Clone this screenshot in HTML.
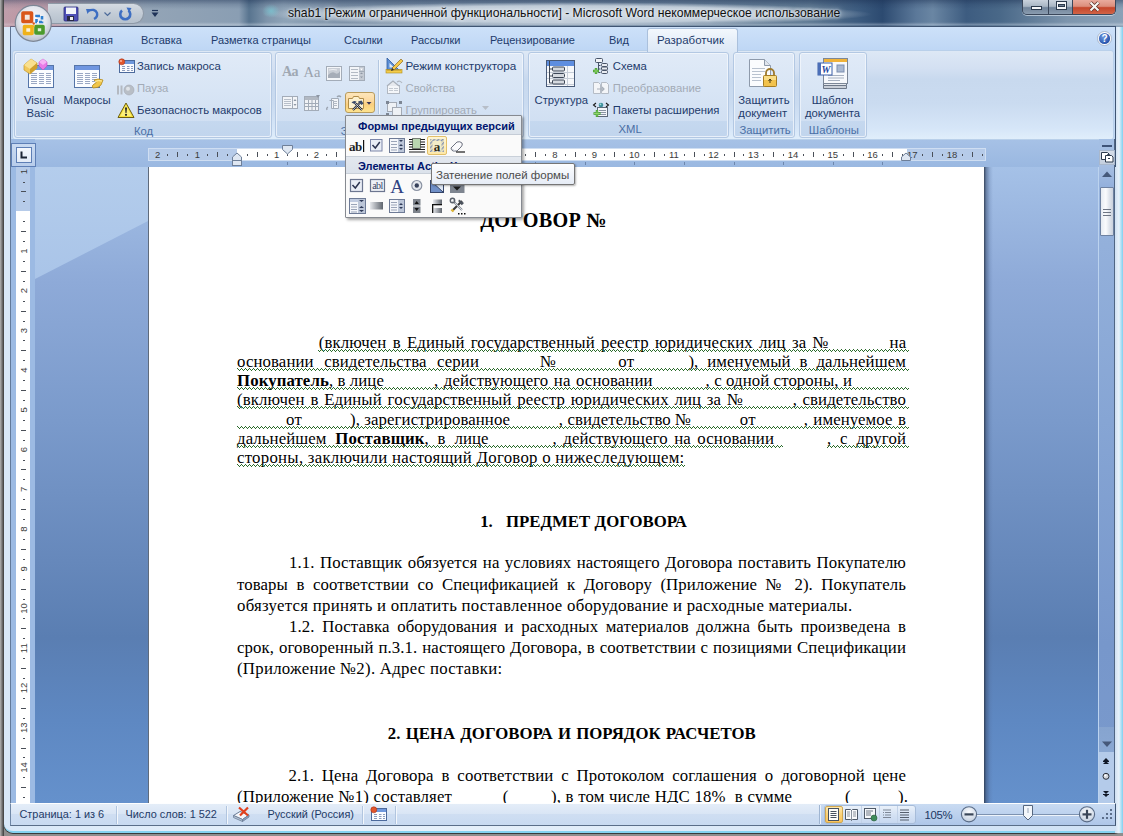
<!DOCTYPE html>
<html><head><meta charset="utf-8">
<style>
*{margin:0;padding:0;box-sizing:border-box}
html,body{width:1123px;height:836px;overflow:hidden;position:relative;background:#8e8e8e;font-family:"Liberation Sans",sans-serif}
.a{position:absolute}
.t{position:absolute;white-space:nowrap;font-family:"Liberation Sans",sans-serif;font-size:11.3px;color:#1e3b6c;line-height:14px}
.g{color:#a3abb6}
.d{position:absolute;white-space:nowrap;font-family:"Liberation Serif",serif;color:#000;line-height:20px}
#desk{left:0;top:0;width:4px;height:836px;background:linear-gradient(90deg,#b4b4b4,#6a6a6a 60%,#3a3a3a)}
#frame{left:4px;top:0;width:1119px;height:833px;background:linear-gradient(90deg,#d9e8f8,#e9f2fb 30%,#cfe1f5 100%);border-radius:0 0 9px 9px;border-bottom:2px solid #84d2f0;box-shadow:0 1px 0 #3a3a3a,-1px 0 0 #4a4a4a}
#rframe{left:1115px;top:0;width:8px;height:833px;background:linear-gradient(90deg,#cfe0f2,#e8f2fb 50%,#7fd0f0)}
#title{left:4px;top:0;width:1119px;height:27px;background:linear-gradient(90deg,#b9a8b3 0%,#aaa6b2 5%,#93a4b6 13%,#8a9eb3 21%,#58748f 21.9%,#7f95ab 23.5%,#8ea3b7 25%,#7b90a7 30%,#748aa2 45%,#6c849d 60%,#5d7892 72%,#3b5a7e 76.5%,#2c4a70 78.5%,#5b7899 81.5%,#6a86a3 83%,#3d5c80 86%,#496888 89%,#7d95ad 95%,#8aa1b7 100%)}
#tabs{left:10px;top:26px;width:1106px;height:114px;background:linear-gradient(#cde1f9,#bfd7f5 20%,#bfd6f3);border-top:1px solid #3f5573;border-left:1px solid #5e7392;border-right:1px solid #3f5573}
#ribbon{left:12px;top:50px;width:1102px;height:89.5px;background:linear-gradient(#dde8f5 0%,#d3e0f2 20%,#c8d9ee 32%,#cadbf0 60%,#d6e6f8 88%,#e0eefb 100%);border:1px solid #b9d0ea;border-radius:3px;box-shadow:0 1px 0 #e2f4fc}
.grp{position:absolute;top:52px;height:86px;border:1px solid #b3c8e3;border-radius:3px;background:linear-gradient(#e0eaf7,#d8e5f5 45%,#d0dff2 85%);box-shadow:inset 0 0 0 1px rgba(255,255,255,.5)}
.lbl{position:absolute;left:1px;right:1px;bottom:1px;height:15px;background:linear-gradient(#c5d8ef,#c1d5ed);border-radius:0 0 2px 2px}
#rulerrow{left:10px;top:140px;width:1106px;height:27px;border-left:1px solid #62799a;border-right:1px solid #3f5573;background:linear-gradient(#a6c1e6,#9ab8e1)}
#docarea{left:35px;top:167px;width:1064px;height:636px;background:linear-gradient(#a5c1e7 0%,#8eaad8 18%,#7a9acb 40%,#6688bb 62%,#5a7eb2 74%,#5e88c2 87%,#6591cc 100%)}
#streak{left:35px;top:167px;width:113px;height:115px;background:linear-gradient(#b4cdec,#a9c4e8);clip-path:polygon(0 0,100% 0,100% 54px,0 112px)}
#vrul{left:10px;top:139px;width:25px;height:664px;background:#9cbae3;border-left:1px solid #62799a}
#page{left:148px;top:167px;width:836px;height:636px;background:#fff;border-left:1px solid #5f6b7c}
#pshadow{left:984px;top:167px;width:9px;height:636px;background:linear-gradient(90deg,rgba(45,58,80,.9),rgba(60,80,115,.55) 25%,rgba(80,105,150,.2) 65%,rgba(90,120,170,0))}
#status{left:10px;top:803px;width:1106px;height:23px;background:linear-gradient(#e0eaf7,#d6e3f4 50%,#c9daf1);border-top:1px solid #fdfeff;border-left:1px solid #6f87a6;border-right:1px solid #3f5573;border-bottom:1px solid #5a6e89}
</style></head><body>
<div class="a" id="frame"></div>
<div class="a" id="desk"></div>
<div class="a" id="rframe"></div>
<div class="a" id="title"></div>
<div class="a" id="tabs"></div>
<div class="a" id="ribbon"></div>
<div class="a" style="left:647px;top:28px;width:91px;height:24px;border:1px solid #aac0dc;border-bottom:none;border-radius:3px 3px 0 0;background:linear-gradient(#f3f8fd,#e4edf8 60%,#dce8f6)"></div>
<div class="t" style="left:71px;top:33px;font-size:11px">Главная</div>
<div class="t" style="left:141px;top:33px;font-size:11px">Вставка</div>
<div class="t" style="left:211px;top:33px;font-size:11px">Разметка страницы</div>
<div class="t" style="left:344px;top:33px;font-size:11px">Ссылки</div>
<div class="t" style="left:411px;top:33px;font-size:11px">Рассылки</div>
<div class="t" style="left:490px;top:33px;font-size:11px">Рецензирование</div>
<div class="t" style="left:609px;top:33px;font-size:11px">Вид</div>
<div class="t" style="left:657px;top:33px;font-size:11.5px">Разработчик</div>
<svg class="a" style="left:1097px;top:31px" width="15" height="15" viewBox="0 0 15 15"><defs><radialGradient id="hg" cx="40%" cy="35%" r="70%"><stop offset="0" stop-color="#6f9be0"/><stop offset="1" stop-color="#1d4aa6"/></radialGradient></defs><circle cx="7.5" cy="7.5" r="7" fill="#fff" stroke="#9aaac0" stroke-width="0.8"/><circle cx="7.5" cy="7.5" r="5.6" fill="url(#hg)"/><text x="7.5" y="11.2" font-family="Liberation Sans" font-weight="bold" font-size="10" fill="#fff" text-anchor="middle">?</text></svg>

<div class="grp" style="left:14px;width:258px"><div class="lbl"></div></div>
<div class="grp" style="left:275px;width:249px"><div class="lbl"></div></div>
<div class="grp" style="left:528px;width:201px"><div class="lbl"></div></div>
<div class="grp" style="left:733px;width:62px"><div class="lbl"></div></div>
<div class="grp" style="left:799px;width:68px"><div class="lbl"></div></div>
<div class="a" style="left:378px;top:60px;width:1px;height:54px;background:#b3c7e0;box-shadow:1px 0 0 #f2f7fc"></div>
<!-- Код texts -->
<div class="t" style="left:24px;top:92.6px">Visual</div>
<div class="t" style="left:26.5px;top:105.7px">Basic</div>
<div class="t" style="left:63.5px;top:92.6px">Макросы</div>
<div class="t" style="left:137px;top:59.1px">Запись макроса</div>
<div class="t g" style="left:137px;top:81px">Пауза</div>
<div class="t" style="left:137px;top:102.9px">Безопасность макросов</div>
<div class="t" style="left:134px;top:123.7px;color:#4a6fa5">Код</div>
<div class="t" style="left:340.5px;top:123.7px;color:#4a6fa5">Элементы управления</div>
<div class="t" style="left:405.5px;top:59.1px;font-size:11.7px">Режим конструктора</div>
<div class="t g" style="left:405.5px;top:80.5px">Свойства</div>
<div class="t g" style="left:405.5px;top:102.6px">Группировать</div>
<svg class="a" style="left:482px;top:106px" width="7" height="4"><path d="M0 0H7L3.5 4Z" fill="#b7bec8"/></svg>
<div class="t" style="left:534.5px;top:93.2px">Структура</div>
<div class="t" style="left:612.8px;top:59.1px">Схема</div>
<div class="t g" style="left:612.8px;top:80.5px">Преобразование</div>
<div class="t" style="left:612.8px;top:102.6px">Пакеты расширения</div>
<div class="t" style="left:618.5px;top:122.1px;color:#4a6fa5">XML</div>
<div class="t" style="left:738.3px;top:92.5px">Защитить</div>
<div class="t" style="left:738.3px;top:105.9px">документ</div>
<div class="t" style="left:739.5px;top:122.6px;color:#4a6fa5">Защитить</div>
<div class="t" style="left:811.7px;top:92.5px">Шаблон</div>
<div class="t" style="left:805px;top:105.9px">документа</div>
<div class="t" style="left:808.8px;top:122.6px;color:#4a6fa5">Шаблоны</div>
<!-- VB icon -->
<svg class="a" style="left:22px;top:56px" width="34" height="34" viewBox="0 0 34 34">
<rect x="6.5" y="9.5" width="25" height="22" fill="#fbfdff" stroke="#5575a8"/>
<rect x="7" y="10" width="24" height="4" fill="#6f96e0"/>
<g stroke="#9aa8c4" stroke-width="1">
<path d="M9 17.5h6M17 17.5h5M24 17.5h5M9 19.5h6M17 19.5h5M24 19.5h5M9 21.5h6M17 21.5h5M24 21.5h5M9 23.5h6M17 23.5h5M24 23.5h5M9 25.5h6M17 25.5h5M24 25.5h5M9 27.5h6M17 27.5h5M24 27.5h5"/>
</g>
<path d="M2 9L9 3L15 7L15 12L8 18L2 14Z" fill="#f1c85a" stroke="#c49a2a" stroke-width=".7"/>
<path d="M2 9L9 3L15 7L8 13Z" fill="#f9e08f"/>
<path d="M8 13L15 7L15 12L8 18Z" fill="#cf9f2d"/>
<path d="M17 6L21 3L25 6L25 10L21 14L17 10Z" fill="#e97be8" stroke="#b94fb9" stroke-width=".6"/>
<path d="M17 6L21 3L25 6L21 9Z" fill="#f7b2f5"/>
</svg>
<!-- Macros icon -->
<svg class="a" style="left:72px;top:63px" width="34" height="28" viewBox="0 0 34 28">
<rect x="2.5" y="2.5" width="25" height="22" fill="#fbfdff" stroke="#5575a8"/>
<rect x="3" y="3" width="24" height="4" fill="#6f96e0"/>
<g stroke="#9aa8c4" stroke-width="1">
<path d="M5 10.5h6M13 10.5h5M20 10.5h5M5 12.5h6M13 12.5h5M20 12.5h5M5 14.5h6M13 14.5h5M20 14.5h5M5 16.5h6M13 16.5h5M20 16.5h5M5 18.5h6M13 18.5h5M20 18.5h5M5 20.5h6M13 20.5h5"/>
</g>
<path d="M22 17Q26 15 31 17L29 22Q27 25 21 25Q19 23 22 21Q25 20 24 19Z" fill="#f0c64a" stroke="#b48a1e" stroke-width=".8"/>
<path d="M23 18.5Q26 17 30 18" stroke="#fff3b0" stroke-width="1" fill="none"/>
</svg>
<!-- Record macro -->
<svg class="a" style="left:118px;top:58px" width="18" height="16" viewBox="0 0 18 16">
<rect x="1.5" y="2.5" width="15" height="12" fill="#fafcff" stroke="#4c6a9c"/>
<rect x="2" y="3" width="14" height="3" fill="#7098dc"/>
<path d="M4 8.5h3M9 8.5h2.5M13 8.5h2M4 10.5h3M9 10.5h2.5M13 10.5h2M4 12.5h3M9 12.5h2.5M13 12.5h2" stroke="#8b9bbb"/>
<circle cx="3.8" cy="3.8" r="3" fill="#e2562c" stroke="#a8321a" stroke-width=".6"/>
<circle cx="3" cy="3" r="1" fill="#f8b79f"/>
</svg>
<!-- Pause -->
<svg class="a" style="left:116px;top:84px" width="20" height="12" viewBox="0 0 20 12">
<rect x="1" y="1.5" width="2" height="9" fill="#b4b9c1"/><rect x="4.5" y="1.5" width="2" height="9" fill="#b4b9c1"/>
<circle cx="13" cy="6" r="5" fill="#b8bec6" stroke="#a2a8b2" stroke-width=".6"/><circle cx="12" cy="4.8" r="2" fill="#dfe3e8"/>
</svg>
<!-- Warning -->
<svg class="a" style="left:117px;top:102px" width="18" height="17" viewBox="0 0 18 17">
<path d="M9 1L17 15.5H1Z" fill="#f8e23a" stroke="#6b5d12" stroke-width="1" stroke-linejoin="round"/>
<path d="M9 3.5L14.5 14H3.5Z" fill="#fbef7a"/>
<path d="M8 5.5h2l-.5 5.5h-1Z" fill="#222"/><circle cx="9" cy="12.8" r="1.1" fill="#222"/>
</svg>
<!-- group2 icons -->
<div class="a" style="left:282px;top:64px;font-family:'Liberation Serif',serif;font-weight:bold;font-size:14px;color:#a0a8b3;letter-spacing:-0.5px;line-height:16px">Aa</div>
<div class="a" style="left:303.5px;top:64px;font-family:'Liberation Serif',serif;font-size:14.5px;color:#9aa2ad;letter-spacing:0px;line-height:16px">Aa</div>
<svg class="a" style="left:325px;top:65px" width="18" height="17" viewBox="0 0 18 17">
<rect x="1.5" y="1.5" width="15" height="14" fill="#f4f6f9" stroke="#a3acb8"/>
<rect x="3" y="3" width="12" height="10" fill="#c9ced6"/>
<path d="M3 10Q7 6 10 8T15 6V13H3Z" fill="#a6adb8"/><path d="M4 5Q8 4 12 5" stroke="#eef0f3" stroke-width="1.2" fill="none"/>
</svg>
<svg class="a" style="left:348px;top:65px" width="18" height="17" viewBox="0 0 18 17">
<rect x="1.5" y="1.5" width="15" height="14" fill="#f3f5f8" stroke="#a3acb8"/>
<path d="M3 4.5h7M3 7.5h7M3 10.5h7M3 13.5h7" stroke="#b3bac4"/>
<rect x="11" y="2" width="5" height="13" fill="#c4cad3"/>
<path d="M12 3.5h3l-1.5 2Z" fill="#fff"/><path d="M12 9l1.5-1.5L15 9Z" fill="#8d96a3"/><path d="M12 11.5h3l-1.5 1.5Z" fill="#8d96a3"/>
<path d="M11 6.5h5" stroke="#a3acb8"/>
</svg>
<svg class="a" style="left:281px;top:95px" width="18" height="15" viewBox="0 0 18 15">
<rect x="1.5" y="1.5" width="15" height="12" fill="#f3f5f8" stroke="#a3acb8"/>
<path d="M3 4.5h7M3 6.5h7M3 8.5h7M3 10.5h7" stroke="#b8bfc9"/>
<path d="M11.5 2v11" stroke="#a3acb8"/>
<path d="M12.5 6l1.5-2 1.5 2Z" fill="#8d96a3"/><path d="M12.5 9h3l-1.5 2Z" fill="#8d96a3"/>
</svg>
<svg class="a" style="left:303px;top:94px" width="18" height="18" viewBox="0 0 18 18">
<rect x="1.5" y="2.5" width="14" height="14" fill="#f1f3f6" stroke="#a3acb8"/>
<rect x="2" y="3" width="13" height="3" fill="#b2b9c3"/>
<path d="M1.5 9.5h14M1.5 12.5h14M5.5 6v11M9 6v11M12.5 6v11" stroke="#a3acb8"/>
<path d="M13 1h4l-2 3Z" fill="#8d96a3"/>
</svg>
<svg class="a" style="left:325px;top:94px" width="18" height="18" viewBox="0 0 18 18">
<path d="M6.5 4.5h7v10h-7Z" fill="#f3f5f8" stroke="#a3acb8"/>
<path d="M4.5 6.5h4v8" stroke="#a3acb8" fill="none"/>
<path d="M8 7.5h4M8 9.5h4M8 11.5h4" stroke="#b3bac4"/>
<path d="M12 3Q14 1 16 3M2 16Q1 14 3 13" stroke="#9aa3af" stroke-width="1.3" fill="none"/>
</svg>
<div class="a" style="left:345px;top:92px;width:30px;height:21px;border:1px solid #b89b5c;border-radius:3px;background:linear-gradient(#fde6bb,#fcd9a0 40%,#fbcf7e 60%,#fde28e)"></div>
<svg class="a" style="left:347px;top:94px" width="27" height="19" viewBox="0 0 27 19">
<path d="M1.5 4.5h4l1-2h5l1 2h4v10h-15Z" fill="#fdf1cf" stroke="#b08d4a" stroke-width="1"/>
<path d="M6 16L13 8.5M15 16L8 9" stroke="#1a1f2e" stroke-width="2"/>
<path d="M6 16L13 8.5M15 16L8 9" stroke="#f2f4f8" stroke-width=".7"/>
<path d="M4.5 8.5q2-2.5 5-1l-2 2.5Z" fill="#3b4a6a"/><path d="M11 7.5l3.5-1 2 3-2 1.5Z" fill="#3b4a6a"/>
<path d="M19.5 8h5l-2.5 2.8Z" fill="#3a3556"/>
</svg>
<!-- Design mode icon -->
<svg class="a" style="left:385px;top:56px" width="19" height="18" viewBox="0 0 19 18">
<path d="M2 2L2 14L14 14Z" fill="#5b8fd6" stroke="#2f5aa0" stroke-width=".8"/>
<path d="M4.5 7L4.5 11.5L9 11.5Z" fill="#dce9f8"/>
<rect x="1" y="13.5" width="16" height="3.5" fill="#f3cc4c" stroke="#b08c1c" stroke-width=".6"/>
<path d="M3 13.5v1.5M5 13.5v1.5M7 13.5v1.5M9 13.5v1.5M11 13.5v1.5M13 13.5v1.5M15 13.5v1.5" stroke="#8a6a10" stroke-width=".6"/>
<path d="M7 12L16 3L18 5L9 14Z" fill="#f5c84a" stroke="#7c5a12" stroke-width=".6"/>
<path d="M7 12L6 15L9 14Z" fill="#333"/>
</svg>
<svg class="a" style="left:385px;top:79px" width="19" height="16" viewBox="0 0 19 16">
<rect x="2.5" y="6.5" width="12" height="8" fill="#f4f6f9" stroke="#b1b8c2"/>
<path d="M4 9.5h4M4 11.5h4M9 9.5h4M9 11.5h4" stroke="#c3c9d1"/>
<path d="M2 7L8 2L14 7" stroke="#a9b0ba" stroke-width="1.2" fill="#e6e9ee"/>
<path d="M12 3Q15 1 17 4" stroke="#b1b8c2" stroke-width="1.2" fill="none"/>
</svg>
<svg class="a" style="left:385px;top:100px" width="19" height="17" viewBox="0 0 19 17">
<rect x="2.5" y="2.5" width="9" height="9" fill="#eef1f5" stroke="#a3aab5"/>
<rect x="7.5" y="7.5" width="9" height="8" fill="#eef1f5" stroke="#a3aab5"/>
<rect x="1" y="1" width="3" height="3" fill="#7d8694"/><rect x="14" y="1" width="3" height="3" fill="#7d8694"/><rect x="1" y="13" width="3" height="3" fill="#7d8694"/>
</svg>
<!-- XML icons -->
<svg class="a" style="left:545px;top:59px" width="31" height="29" viewBox="0 0 31 29">
<rect x="1.5" y="1.5" width="28" height="26" fill="#f6f8fb" stroke="#485a78"/>
<rect x="2" y="2" width="27" height="5" fill="#5e8ee0"/>
<path d="M2 13.5h27M2 19.5h27M2 25.5h27M22.5 7v20" stroke="#c6cdd8"/>
<path d="M4.5 2v22h3M4.5 10h3M4.5 17h3" stroke="#3c4656" fill="none" stroke-width="1"/>
<rect x="7.5" y="8" width="12" height="4" rx="1" fill="#d5d9df" stroke="#3c4656"/>
<rect x="7.5" y="14.5" width="12" height="4" rx="1" fill="#d5d9df" stroke="#3c4656"/>
<rect x="7.5" y="21" width="12" height="4" rx="1" fill="#d5d9df" stroke="#3c4656"/>
</svg>
<svg class="a" style="left:592px;top:57px" width="17" height="18" viewBox="0 0 17 18">
<rect x="3.5" y="1.5" width="7" height="4" rx="1" fill="#f3f5f8" stroke="#485468"/>
<path d="M6.5 5.5v10h2M6.5 8.5h2M6.5 12h2" stroke="#485468" fill="none"/>
<rect x="9.5" y="6.5" width="6" height="3" rx="1" fill="#e9ecf1" stroke="#485468"/>
<rect x="9.5" y="10" width="6" height="3" rx="1" fill="#e9ecf1" stroke="#485468"/>
<rect x="9.5" y="13.5" width="6" height="3" rx="1" fill="#e9ecf1" stroke="#485468"/>
<path d="M4 11v6M1 14h6" stroke="#3f9a2a" stroke-width="2.4"/><path d="M4 11.5v5M1.5 14h5" stroke="#8fd46a" stroke-width="1"/>
</svg>
<svg class="a" style="left:592px;top:81px" width="18" height="14" viewBox="0 0 18 14">
<path d="M1.5 1.5h5l2 2v9h-7Z" fill="#f3f5f8" stroke="#b5bcc6"/>
<path d="M9.5 1.5h5l2 2v9h-7Z" fill="#f3f5f8" stroke="#b5bcc6"/>
<path d="M5 8h7M10 6l2 2-2 2" stroke="#a9b0ba" stroke-width="1.2" fill="none"/>
</svg>
<svg class="a" style="left:592px;top:101px" width="18" height="17" viewBox="0 0 18 17">
<rect x="5.5" y="6.5" width="10" height="9" fill="#f4f6f9" stroke="#5d6878"/>
<path d="M7 9.5h7M7 11.5h7M7 13.5h7" stroke="#8a94a3"/>
<path d="M4 2L1.5 4L4 6M14 2L16.5 4L14 6" stroke="#1a1a1a" stroke-width="1.1" fill="none"/>
<circle cx="9" cy="4" r="2.3" fill="#3f8f9c"/><circle cx="8.4" cy="3.3" r=".9" fill="#9fe0d8"/>
<path d="M5 9v7M1.5 12.5h7" stroke="#3f9a2a" stroke-width="2.4"/><path d="M5 9.5v6M2 12.5h6" stroke="#8fd46a" stroke-width="1"/>
</svg>
<!-- Protect doc -->
<svg class="a" style="left:748px;top:58px" width="31" height="31" viewBox="0 0 31 31">
<path d="M1.5 1.5h15l6 6v21h-21Z" fill="#fbfcfe" stroke="#8e9aab"/>
<path d="M16.5 1.5v6h6" fill="#e1e6ee" stroke="#8e9aab"/>
<path d="M4 10.5h13M4 13.5h13M4 16.5h9M4 19.5h9M4 22.5h9" stroke="#b9c2cf"/>
<path d="M18 18v-3a4 4 0 0 1 8 0v3" stroke="#9e7a2e" stroke-width="1.8" fill="none"/>
<rect x="15.5" y="17.5" width="13" height="11" rx="1" fill="#f2c24c" stroke="#a57c22"/>
<rect x="16" y="18" width="12" height="4" fill="#f9dd86"/>
<path d="M22 21v4M20.5 23l1.5-2 1.5 2" stroke="#4a3a12" stroke-width="1" fill="none"/>
</svg>
<!-- Template -->
<svg class="a" style="left:816px;top:57px" width="34" height="34" viewBox="0 0 34 34">
<path d="M7.5 28.5h23v3h-23Z" fill="#c9cfd8" stroke="#6d7888"/>
<path d="M7.5 26.5h23v2h-23Z" fill="#e3e7ed" stroke="#6d7888"/>
<rect x="7.5" y="1.5" width="24" height="25" fill="#f7f9fc" stroke="#7c8797"/>
<rect x="8" y="2" width="23" height="3" fill="#f0b33a"/>
<rect x="21" y="8" width="7" height="7" fill="#a9b9d2" stroke="#7c8fb0"/>
<path d="M12 18.5h16M12 21h16M12 23.5h12" stroke="#a7b1c0"/>
<rect x="2" y="6" width="14" height="12" fill="#fff" stroke="#3a5ea8"/>
<rect x="2" y="6" width="3" height="12" fill="#4b6fb8"/>
<text x="10" y="16" font-family="Liberation Serif" font-style="italic" font-weight="bold" font-size="10" fill="#2446a0" text-anchor="middle">W</text>
</svg>

<div class="a" id="rulerrow"></div>
<div class="a" id="vrul"></div>
<div class="a" id="docarea"></div>
<div class="a" id="streak"></div>
<div class="a" id="page"></div>
<div class="a" id="pshadow"></div>
<div class="a" style="left:11px;top:143px;width:25px;height:24px;border:1px solid #5e7fb6;background:linear-gradient(#c9daf1,#b8cdeb)"></div>
<div class="a" style="left:16px;top:147px;width:16px;height:16px;border:1px solid #5e7fb6;background:linear-gradient(#f5f8fd,#e3ebf7)"></div>
<svg class="a" style="left:16px;top:147px" width="16" height="16"><path d="M5.5 4.5v6h5.5" stroke="#1d2636" stroke-width="2" fill="none"/></svg>
<div class="a" style="left:148px;top:148px;width:838px;height:13px;background:#b6cbe9;border:1px solid #cfdef2"></div>
<div class="a" style="left:237px;top:149px;width:670px;height:11px;background:#fff"></div>
<svg class="a" style="left:0;top:0" width="1123" height="836">
<text x="157.6" y="157.6" font-family="Liberation Sans" font-size="9.5" fill="#3b3b3b" text-anchor="middle">2</text>
<rect x="167" y="154" width="1" height="2" fill="#4a4f58"/>
<rect x="177" y="152" width="1" height="5" fill="#4a4f58"/>
<rect x="187" y="154" width="1" height="2" fill="#4a4f58"/>
<text x="197.3" y="157.6" font-family="Liberation Sans" font-size="9.5" fill="#3b3b3b" text-anchor="middle">1</text>
<rect x="207" y="154" width="1" height="2" fill="#4a4f58"/>
<rect x="217" y="152" width="1" height="5" fill="#4a4f58"/>
<rect x="227" y="154" width="1" height="2" fill="#4a4f58"/>
<rect x="247" y="154" width="1" height="2" fill="#4a4f58"/>
<rect x="257" y="152" width="1" height="5" fill="#4a4f58"/>
<rect x="267" y="154" width="1" height="2" fill="#4a4f58"/>
<text x="276.7" y="157.6" font-family="Liberation Sans" font-size="9.5" fill="#3b3b3b" text-anchor="middle">1</text>
<rect x="287" y="154" width="1" height="2" fill="#4a4f58"/>
<rect x="297" y="152" width="1" height="5" fill="#4a4f58"/>
<rect x="307" y="154" width="1" height="2" fill="#4a4f58"/>
<text x="316.4" y="157.6" font-family="Liberation Sans" font-size="9.5" fill="#3b3b3b" text-anchor="middle">2</text>
<rect x="326" y="154" width="1" height="2" fill="#4a4f58"/>
<rect x="336" y="152" width="1" height="5" fill="#4a4f58"/>
<rect x="346" y="154" width="1" height="2" fill="#4a4f58"/>
<text x="356.2" y="157.6" font-family="Liberation Sans" font-size="9.5" fill="#3b3b3b" text-anchor="middle">3</text>
<rect x="366" y="154" width="1" height="2" fill="#4a4f58"/>
<rect x="376" y="152" width="1" height="5" fill="#4a4f58"/>
<rect x="386" y="154" width="1" height="2" fill="#4a4f58"/>
<text x="395.9" y="157.6" font-family="Liberation Sans" font-size="9.5" fill="#3b3b3b" text-anchor="middle">4</text>
<rect x="406" y="154" width="1" height="2" fill="#4a4f58"/>
<rect x="416" y="152" width="1" height="5" fill="#4a4f58"/>
<rect x="426" y="154" width="1" height="2" fill="#4a4f58"/>
<text x="435.6" y="157.6" font-family="Liberation Sans" font-size="9.5" fill="#3b3b3b" text-anchor="middle">5</text>
<rect x="446" y="154" width="1" height="2" fill="#4a4f58"/>
<rect x="455" y="152" width="1" height="5" fill="#4a4f58"/>
<rect x="465" y="154" width="1" height="2" fill="#4a4f58"/>
<text x="475.3" y="157.6" font-family="Liberation Sans" font-size="9.5" fill="#3b3b3b" text-anchor="middle">6</text>
<rect x="485" y="154" width="1" height="2" fill="#4a4f58"/>
<rect x="495" y="152" width="1" height="5" fill="#4a4f58"/>
<rect x="505" y="154" width="1" height="2" fill="#4a4f58"/>
<text x="515.0" y="157.6" font-family="Liberation Sans" font-size="9.5" fill="#3b3b3b" text-anchor="middle">7</text>
<rect x="525" y="154" width="1" height="2" fill="#4a4f58"/>
<rect x="535" y="152" width="1" height="5" fill="#4a4f58"/>
<rect x="545" y="154" width="1" height="2" fill="#4a4f58"/>
<text x="554.8" y="157.6" font-family="Liberation Sans" font-size="9.5" fill="#3b3b3b" text-anchor="middle">8</text>
<rect x="565" y="154" width="1" height="2" fill="#4a4f58"/>
<rect x="575" y="152" width="1" height="5" fill="#4a4f58"/>
<rect x="585" y="154" width="1" height="2" fill="#4a4f58"/>
<text x="594.5" y="157.6" font-family="Liberation Sans" font-size="9.5" fill="#3b3b3b" text-anchor="middle">9</text>
<rect x="604" y="154" width="1" height="2" fill="#4a4f58"/>
<rect x="614" y="152" width="1" height="5" fill="#4a4f58"/>
<rect x="624" y="154" width="1" height="2" fill="#4a4f58"/>
<text x="634.2" y="157.6" font-family="Liberation Sans" font-size="9.5" fill="#3b3b3b" text-anchor="middle">10</text>
<rect x="644" y="154" width="1" height="2" fill="#4a4f58"/>
<rect x="654" y="152" width="1" height="5" fill="#4a4f58"/>
<rect x="664" y="154" width="1" height="2" fill="#4a4f58"/>
<text x="673.9" y="157.6" font-family="Liberation Sans" font-size="9.5" fill="#3b3b3b" text-anchor="middle">11</text>
<rect x="684" y="154" width="1" height="2" fill="#4a4f58"/>
<rect x="694" y="152" width="1" height="5" fill="#4a4f58"/>
<rect x="704" y="154" width="1" height="2" fill="#4a4f58"/>
<text x="713.6" y="157.6" font-family="Liberation Sans" font-size="9.5" fill="#3b3b3b" text-anchor="middle">12</text>
<rect x="724" y="154" width="1" height="2" fill="#4a4f58"/>
<rect x="734" y="152" width="1" height="5" fill="#4a4f58"/>
<rect x="743" y="154" width="1" height="2" fill="#4a4f58"/>
<text x="753.4" y="157.6" font-family="Liberation Sans" font-size="9.5" fill="#3b3b3b" text-anchor="middle">13</text>
<rect x="763" y="154" width="1" height="2" fill="#4a4f58"/>
<rect x="773" y="152" width="1" height="5" fill="#4a4f58"/>
<rect x="783" y="154" width="1" height="2" fill="#4a4f58"/>
<text x="793.1" y="157.6" font-family="Liberation Sans" font-size="9.5" fill="#3b3b3b" text-anchor="middle">14</text>
<rect x="803" y="154" width="1" height="2" fill="#4a4f58"/>
<rect x="813" y="152" width="1" height="5" fill="#4a4f58"/>
<rect x="823" y="154" width="1" height="2" fill="#4a4f58"/>
<text x="832.8" y="157.6" font-family="Liberation Sans" font-size="9.5" fill="#3b3b3b" text-anchor="middle">15</text>
<rect x="843" y="154" width="1" height="2" fill="#4a4f58"/>
<rect x="853" y="152" width="1" height="5" fill="#4a4f58"/>
<rect x="863" y="154" width="1" height="2" fill="#4a4f58"/>
<text x="872.5" y="157.6" font-family="Liberation Sans" font-size="9.5" fill="#3b3b3b" text-anchor="middle">16</text>
<rect x="882" y="154" width="1" height="2" fill="#4a4f58"/>
<rect x="892" y="152" width="1" height="5" fill="#4a4f58"/>
<rect x="902" y="154" width="1" height="2" fill="#4a4f58"/>
<text x="912.2" y="157.6" font-family="Liberation Sans" font-size="9.5" fill="#3b3b3b" text-anchor="middle">17</text>
<rect x="922" y="154" width="1" height="2" fill="#4a4f58"/>
<rect x="932" y="152" width="1" height="5" fill="#4a4f58"/>
<rect x="942" y="154" width="1" height="2" fill="#4a4f58"/>
<text x="952.0" y="157.6" font-family="Liberation Sans" font-size="9.5" fill="#3b3b3b" text-anchor="middle">18</text>
<rect x="962" y="154" width="1" height="2" fill="#4a4f58"/>
<rect x="972" y="152" width="1" height="5" fill="#4a4f58"/>
<rect x="982" y="154" width="1" height="2" fill="#4a4f58"/>
<rect x="287" y="162" width="1" height="3" fill="#6e87ad"/>
<rect x="336" y="162" width="1" height="3" fill="#6e87ad"/>
<rect x="386" y="162" width="1" height="3" fill="#6e87ad"/>
<rect x="436" y="162" width="1" height="3" fill="#6e87ad"/>
<rect x="485" y="162" width="1" height="3" fill="#6e87ad"/>
<rect x="535" y="162" width="1" height="3" fill="#6e87ad"/>
<rect x="585" y="162" width="1" height="3" fill="#6e87ad"/>
<rect x="634" y="162" width="1" height="3" fill="#6e87ad"/>
<rect x="684" y="162" width="1" height="3" fill="#6e87ad"/>
<rect x="734" y="162" width="1" height="3" fill="#6e87ad"/>
<rect x="783" y="162" width="1" height="3" fill="#6e87ad"/>
<rect x="833" y="162" width="1" height="3" fill="#6e87ad"/>
<rect x="882" y="162" width="1" height="3" fill="#6e87ad"/>
<path d="M282.5 145.5h10v4l-5 4.5l-5-4.5Z" fill="#dfe7f2" stroke="#6e7f98"/>
<path d="M232.5 160.5v-3.5l4.5-4l4.5 4v3.5Z" fill="#dfe7f2" stroke="#6e7f98"/>
<rect x="232.5" y="160.5" width="9" height="5" fill="#dfe7f2" stroke="#6e7f98"/>
<path d="M901.5 160.5v-3.5l4.5-4l4.5 4v3.5Z" fill="#dfe7f2" stroke="#6e7f98"/>
<rect x="16" y="167" width="14" height="636" fill="#fff"/>
<rect x="16" y="167" width="14" height="44" fill="#b6cbe9"/>
<text x="0" y="0" transform="translate(26.5 171.6) rotate(-90)" font-family="Liberation Sans" font-size="9.5" fill="#3b3b3b" text-anchor="middle">1</text>
<rect x="23" y="182" width="2" height="1" fill="#4a4f58"/>
<rect x="21" y="191" width="5" height="1" fill="#4a4f58"/>
<rect x="23" y="201" width="2" height="1" fill="#4a4f58"/>
<rect x="23" y="221" width="2" height="1" fill="#4a4f58"/>
<rect x="21" y="231" width="5" height="1" fill="#4a4f58"/>
<rect x="23" y="241" width="2" height="1" fill="#4a4f58"/>
<text x="0" y="0" transform="translate(26.5 251.0) rotate(-90)" font-family="Liberation Sans" font-size="9.5" fill="#3b3b3b" text-anchor="middle">1</text>
<rect x="23" y="261" width="2" height="1" fill="#4a4f58"/>
<rect x="21" y="271" width="5" height="1" fill="#4a4f58"/>
<rect x="23" y="281" width="2" height="1" fill="#4a4f58"/>
<text x="0" y="0" transform="translate(26.5 290.7) rotate(-90)" font-family="Liberation Sans" font-size="9.5" fill="#3b3b3b" text-anchor="middle">2</text>
<rect x="23" y="301" width="2" height="1" fill="#4a4f58"/>
<rect x="21" y="311" width="5" height="1" fill="#4a4f58"/>
<rect x="23" y="321" width="2" height="1" fill="#4a4f58"/>
<text x="0" y="0" transform="translate(26.5 330.5) rotate(-90)" font-family="Liberation Sans" font-size="9.5" fill="#3b3b3b" text-anchor="middle">3</text>
<rect x="23" y="340" width="2" height="1" fill="#4a4f58"/>
<rect x="21" y="350" width="5" height="1" fill="#4a4f58"/>
<rect x="23" y="360" width="2" height="1" fill="#4a4f58"/>
<text x="0" y="0" transform="translate(26.5 370.2) rotate(-90)" font-family="Liberation Sans" font-size="9.5" fill="#3b3b3b" text-anchor="middle">4</text>
<rect x="23" y="380" width="2" height="1" fill="#4a4f58"/>
<rect x="21" y="390" width="5" height="1" fill="#4a4f58"/>
<rect x="23" y="400" width="2" height="1" fill="#4a4f58"/>
<text x="0" y="0" transform="translate(26.5 409.9) rotate(-90)" font-family="Liberation Sans" font-size="9.5" fill="#3b3b3b" text-anchor="middle">5</text>
<rect x="23" y="420" width="2" height="1" fill="#4a4f58"/>
<rect x="21" y="430" width="5" height="1" fill="#4a4f58"/>
<rect x="23" y="440" width="2" height="1" fill="#4a4f58"/>
<text x="0" y="0" transform="translate(26.5 449.6) rotate(-90)" font-family="Liberation Sans" font-size="9.5" fill="#3b3b3b" text-anchor="middle">6</text>
<rect x="23" y="460" width="2" height="1" fill="#4a4f58"/>
<rect x="21" y="469" width="5" height="1" fill="#4a4f58"/>
<rect x="23" y="479" width="2" height="1" fill="#4a4f58"/>
<text x="0" y="0" transform="translate(26.5 489.3) rotate(-90)" font-family="Liberation Sans" font-size="9.5" fill="#3b3b3b" text-anchor="middle">7</text>
<rect x="23" y="499" width="2" height="1" fill="#4a4f58"/>
<rect x="21" y="509" width="5" height="1" fill="#4a4f58"/>
<rect x="23" y="519" width="2" height="1" fill="#4a4f58"/>
<text x="0" y="0" transform="translate(26.5 529.1) rotate(-90)" font-family="Liberation Sans" font-size="9.5" fill="#3b3b3b" text-anchor="middle">8</text>
<rect x="23" y="539" width="2" height="1" fill="#4a4f58"/>
<rect x="21" y="549" width="5" height="1" fill="#4a4f58"/>
<rect x="23" y="559" width="2" height="1" fill="#4a4f58"/>
<text x="0" y="0" transform="translate(26.5 568.8) rotate(-90)" font-family="Liberation Sans" font-size="9.5" fill="#3b3b3b" text-anchor="middle">9</text>
<rect x="23" y="579" width="2" height="1" fill="#4a4f58"/>
<rect x="21" y="589" width="5" height="1" fill="#4a4f58"/>
<rect x="23" y="599" width="2" height="1" fill="#4a4f58"/>
<text x="0" y="0" transform="translate(26.5 608.5) rotate(-90)" font-family="Liberation Sans" font-size="9.5" fill="#3b3b3b" text-anchor="middle">10</text>
<rect x="23" y="618" width="2" height="1" fill="#4a4f58"/>
<rect x="21" y="628" width="5" height="1" fill="#4a4f58"/>
<rect x="23" y="638" width="2" height="1" fill="#4a4f58"/>
<text x="0" y="0" transform="translate(26.5 648.2) rotate(-90)" font-family="Liberation Sans" font-size="9.5" fill="#3b3b3b" text-anchor="middle">11</text>
<rect x="23" y="658" width="2" height="1" fill="#4a4f58"/>
<rect x="21" y="668" width="5" height="1" fill="#4a4f58"/>
<rect x="23" y="678" width="2" height="1" fill="#4a4f58"/>
<text x="0" y="0" transform="translate(26.5 687.9) rotate(-90)" font-family="Liberation Sans" font-size="9.5" fill="#3b3b3b" text-anchor="middle">12</text>
<rect x="23" y="698" width="2" height="1" fill="#4a4f58"/>
<rect x="21" y="708" width="5" height="1" fill="#4a4f58"/>
<rect x="23" y="718" width="2" height="1" fill="#4a4f58"/>
<text x="0" y="0" transform="translate(26.5 727.7) rotate(-90)" font-family="Liberation Sans" font-size="9.5" fill="#3b3b3b" text-anchor="middle">13</text>
<rect x="23" y="738" width="2" height="1" fill="#4a4f58"/>
<rect x="21" y="748" width="5" height="1" fill="#4a4f58"/>
<rect x="23" y="757" width="2" height="1" fill="#4a4f58"/>
<text x="0" y="0" transform="translate(26.5 767.4) rotate(-90)" font-family="Liberation Sans" font-size="9.5" fill="#3b3b3b" text-anchor="middle">14</text>
<rect x="23" y="777" width="2" height="1" fill="#4a4f58"/>
<rect x="21" y="787" width="5" height="1" fill="#4a4f58"/>
<rect x="23" y="797" width="2" height="1" fill="#4a4f58"/>
</svg>
<div class="a" id="doc" style="left:0;top:0;width:1123px;height:803px;overflow:hidden"><div class="d" style="left:480.2px;top:209.78px;font-size:20.2px;letter-spacing:0.25px;font-weight:bold;">ДОГОВОР №</div>
<div class="d" style="left:318.8px;top:332.83px;font-size:16.8px;letter-spacing:0.1px;width:509.8px;text-align:justify;text-align-last:justify;">(включен в Единый государственный реестр юридических лиц за №</div>
<div class="d" style="left:889.4px;top:332.83px;font-size:16.8px;letter-spacing:0.27px;">на</div>
<div class="d" style="left:237px;top:352.03px;font-size:16.8px;letter-spacing:0.1px;width:242.0px;text-align:justify;text-align-last:justify;">основании свидетельства серии</div>
<div class="d" style="left:540px;top:352.03px;font-size:16.8px;letter-spacing:0.27px;">№</div>
<div class="d" style="left:618.3px;top:352.03px;font-size:16.8px;letter-spacing:0.27px;">от</div>
<div class="d" style="left:688.4px;top:352.03px;font-size:16.8px;letter-spacing:0.1px;width:217.6px;text-align:justify;text-align-last:justify;">), именуемый в дальнейшем</div>
<div class="d" style="left:237px;top:371.13px;font-size:16.8px;letter-spacing:0.1px;width:145.7px;text-align:justify;text-align-last:justify;"><b>Покупатель</b>, в лице</div>
<div class="d" style="left:434px;top:371.13px;font-size:16.8px;letter-spacing:0.1px;width:218.6px;text-align:justify;text-align-last:justify;">, действующего на основании</div>
<div class="d" style="left:705.6px;top:371.13px;font-size:16.8px;letter-spacing:0.1px;width:146.4px;text-align:justify;text-align-last:justify;">, с одной стороны, и</div>
<div class="d" style="left:237px;top:390.23px;font-size:16.8px;letter-spacing:0.1px;width:506.0px;text-align:justify;text-align-last:justify;">(включен в Единый государственный реестр юридических лиц за №</div>
<div class="d" style="left:792.8px;top:390.23px;font-size:16.8px;letter-spacing:0.1px;width:113.2px;text-align:justify;text-align-last:justify;">, свидетельство</div>
<div class="d" style="left:286px;top:409.53px;font-size:16.8px;letter-spacing:0.27px;">от</div>
<div class="d" style="left:350px;top:409.53px;font-size:16.8px;letter-spacing:0.1px;width:155.8px;text-align:justify;text-align-last:justify;">), зарегистрированное</div>
<div class="d" style="left:558.8px;top:409.53px;font-size:16.8px;letter-spacing:0.1px;width:128.1px;text-align:justify;text-align-last:justify;">, свидетельство №</div>
<div class="d" style="left:739.8px;top:409.53px;font-size:16.8px;letter-spacing:0.27px;">от</div>
<div class="d" style="left:803.7px;top:409.53px;font-size:16.8px;letter-spacing:0.1px;width:102.3px;text-align:justify;text-align-last:justify;">, именуемое в</div>
<div class="d" style="left:237px;top:428.73px;font-size:16.8px;letter-spacing:0.1px;width:251.6px;text-align:justify;text-align-last:justify;">дальнейшем <b>Поставщик</b>, в лице</div>
<div class="d" style="left:552.5px;top:428.73px;font-size:16.8px;letter-spacing:0.1px;width:221.5px;text-align:justify;text-align-last:justify;">, действующего на основании</div>
<div class="d" style="left:827px;top:428.73px;font-size:16.8px;letter-spacing:0.1px;width:79.0px;text-align:justify;text-align-last:justify;">, с другой</div>
<div class="d" style="left:237px;top:447.93px;font-size:16.8px;letter-spacing:0.27px;">стороны, заключили настоящий Договор о нижеследующем:</div>
<div class="d" style="left:480.2px;top:511.53px;font-size:16.8px;letter-spacing:0px;font-weight:bold;width:206.8px;text-align:justify;text-align-last:justify;">1.&nbsp;&nbsp;&nbsp;ПРЕДМЕТ ДОГОВОРА</div>
<div class="d" style="left:289px;top:553.33px;font-size:16.8px;letter-spacing:0.1px;width:617.0px;text-align:justify;text-align-last:justify;">1.1. Поставщик обязуется на условиях настоящего Договора поставить Покупателю</div>
<div class="d" style="left:237px;top:574.53px;font-size:16.8px;letter-spacing:0.1px;width:669.0px;text-align:justify;text-align-last:justify;">товары в соответствии со Спецификацией к Договору (Приложение № 2). Покупатель</div>
<div class="d" style="left:237px;top:595.73px;font-size:16.8px;letter-spacing:0.27px;">обязуется принять и оплатить поставленное оборудование и расходные материалы.</div>
<div class="d" style="left:289px;top:616.93px;font-size:16.8px;letter-spacing:0.1px;width:617.0px;text-align:justify;text-align-last:justify;">1.2. Поставка оборудования и расходных материалов должна быть произведена в</div>
<div class="d" style="left:237px;top:638.13px;font-size:16.8px;letter-spacing:0.1px;width:669.0px;text-align:justify;text-align-last:justify;">срок, оговоренный п.3.1. настоящего Договора, в соответствии с позициями Спецификации</div>
<div class="d" style="left:237px;top:659.33px;font-size:16.8px;letter-spacing:0.27px;">(Приложение №2). Адрес поставки:</div>
<div class="d" style="left:387.8px;top:723.63px;font-size:16.8px;letter-spacing:0px;font-weight:bold;width:367.9px;text-align:justify;text-align-last:justify;">2. ЦЕНА ДОГОВОРА И ПОРЯДОК РАСЧЕТОВ</div>
<div class="d" style="left:288.4px;top:766.23px;font-size:16.8px;letter-spacing:0.1px;width:617.6px;text-align:justify;text-align-last:justify;">2.1. Цена Договора в соответствии с Протоколом соглашения о договорной цене</div>
<div class="d" style="left:237px;top:786.83px;font-size:16.8px;letter-spacing:0.1px;width:214.9px;text-align:justify;text-align-last:justify;">(Приложение №1) составляет</div>
<div class="d" style="left:502.7px;top:786.83px;font-size:16.8px;letter-spacing:0.27px;">(</div>
<div class="d" style="left:551px;top:786.83px;font-size:16.8px;letter-spacing:0.1px;width:241.0px;text-align:justify;text-align-last:justify;">), в том числе НДС 18%&nbsp; в сумме</div>
<div class="d" style="left:845px;top:786.83px;font-size:16.8px;letter-spacing:0.27px;">(</div>
<div class="d" style="left:898px;top:786.83px;font-size:16.8px;letter-spacing:0.27px;">).</div>
<svg class="a" style="left:0;top:0" width="1123" height="836" shape-rendering="crispEdges"><defs><pattern id="wv" width="4" height="3" patternUnits="userSpaceOnUse"><rect x="0" y="0" width="1" height="1" fill="#2a6a2a"/><rect x="1" y="1" width="1" height="1" fill="#2a6a2a"/><rect x="2" y="2" width="1" height="1" fill="#2a6a2a"/><rect x="3" y="1" width="1" height="1" fill="#2a6a2a"/></pattern></defs>
<rect x="317" y="0" width="591" height="3" fill="url(#wv)" transform="translate(1 349)"/>
<rect x="236" y="0" width="672" height="3" fill="url(#wv)" transform="translate(1 368)"/>
<rect x="236" y="0" width="672" height="3" fill="url(#wv)" transform="translate(1 387)"/>
<rect x="236" y="0" width="672" height="3" fill="url(#wv)" transform="translate(1 406)"/>
<rect x="236" y="0" width="672" height="3" fill="url(#wv)" transform="translate(1 426)"/>
<rect x="236" y="0" width="546" height="3" fill="url(#wv)" transform="translate(1 445)"/>
<rect x="826" y="0" width="82" height="3" fill="url(#wv)" transform="translate(1 445)"/>
<rect x="236" y="0" width="448" height="3" fill="url(#wv)" transform="translate(1 464)"/>
</svg></div>
<div class="a" style="left:1098px;top:167px;width:17px;height:636px;background:linear-gradient(#99b5de,#86a5d4 40%,#7797cb 75%,#7a9acc);border-left:1px solid #bcd3ef;border-right:1px solid #506684"></div>
<div class="a" style="left:1099px;top:139px;width:16px;height:28px;background:#a4bfe4;border-right:1px solid #506684"></div>
<div class="a" style="left:1102px;top:145px;width:10px;height:2px;background:#3e5479"></div>
<div class="a" style="left:1099px;top:150px;width:16px;height:15px;background:linear-gradient(#d7dee9,#c4cfde);border:1px solid #a9b8cd"></div>
<svg class="a" style="left:1100px;top:151px" width="14" height="13" viewBox="0 0 14 13"><path d="M1.5 1.5h6l2 2h-2v5h-6Z" fill="#fff" stroke="#2d3a4d"/><path d="M5.5 4.5h6l1.5 1.5v5h-7.5Z" fill="#fff" stroke="#2d3a4d"/><path d="M8 8l1-1 1 1" stroke="#2d3a4d" fill="none"/></svg>
<div class="a" style="left:1099px;top:165px;width:15px;height:22px;background:linear-gradient(#a7bfe2,#93b0dc)"></div>
<svg class="a" style="left:1102px;top:171px" width="10" height="6"><path d="M0 6L5 0.5L10 6Z" fill="#46597a"/></svg>
<div class="a" style="left:1100px;top:187px;width:14px;height:49px;border:1px solid #6e82a2;border-radius:1px;background:linear-gradient(90deg,#e6ebf2,#fafbfd 40%,#dfe4ec 70%,#c9d1dd)"></div>
<div class="a" style="left:1103px;top:209px;width:8px;height:7px;border-top:1px solid #6d7584;border-bottom:1px solid #6d7584"><div class="a" style="left:0;top:2px;width:8px;height:1px;background:#6d7584"></div></div>
<div class="a" style="left:1099px;top:727px;width:15px;height:25px;background:linear-gradient(#86a4cf,#8aa8d3)"></div>
<svg class="a" style="left:1102px;top:741px" width="10" height="6"><path d="M0 0.5L5 6L10 0.5Z" fill="#46597a"/></svg>
<div class="a" style="left:1099px;top:752px;width:15px;height:51px;background:#b4cbea"></div>
<svg class="a" style="left:1101px;top:753px" width="12" height="50" viewBox="0 0 12 50">
<path d="M2 8L5 5L8 8Z M2 11L5 8L8 11Z" fill="#101828"/><rect x="2" y="8" width="6" height="1" fill="#101828"/>
<circle cx="5" cy="23.3" r="3" fill="#d2d6dc" stroke="#2a2f38" stroke-width="1"/><circle cx="4.3" cy="22.5" r="1.1" fill="#fff"/>
<path d="M2 38L5 41L8 38Z M2 41L5 44L8 41Z" fill="#101828"/><rect x="2" y="41" width="6" height="1" fill="#101828"/>
</svg>

<div class="a" id="status"></div>
<div class="a" style="left:11px;top:804px;width:1104px;height:10px;background:linear-gradient(#e4edf8,#d9e5f5)"></div>
<div class="a" style="left:11px;top:814px;width:1104px;height:11px;background:linear-gradient(#cfdef2,#c8daf1)"></div>
<div class="t" style="left:19.5px;top:807px;font-size:10.9px;color:#1e3a66">Страница: 1 из 6</div>
<div class="a" style="left:116px;top:806px;width:1px;height:18px;background:#b1c5df;box-shadow:1px 0 0 #f3f7fc"></div>
<div class="t" style="left:125.5px;top:807px;font-size:10.9px;color:#1e3a66">Число слов: 1 522</div>
<div class="a" style="left:226px;top:806px;width:1px;height:18px;background:#b1c5df;box-shadow:1px 0 0 #f3f7fc"></div>
<svg class="a" style="left:232px;top:806px" width="20" height="16" viewBox="0 0 20 16">
<path d="M1.5 9.5L8 5.5L17 9L10.5 13.5Z" fill="#f4f6fa" stroke="#6a7c96"/>
<path d="M1.5 9.5v2L10.5 15.5V13.5Z" fill="#b9c6d8" stroke="#6a7c96" stroke-width=".8"/>
<path d="M10.5 13.5v2L17 11V9Z" fill="#8fa3c0" stroke="#6a7c96" stroke-width=".8"/>
<path d="M7 1.5L16 9.5M16 1.5L8 9.5" stroke="#e2401c" stroke-width="2.2"/>
</svg>
<div class="t" style="left:267.5px;top:807px;font-size:10.9px;color:#1e3a66">Русский (Россия)</div>
<div class="a" style="left:362px;top:806px;width:1px;height:18px;background:#b1c5df;box-shadow:1px 0 0 #f3f7fc"></div>
<svg class="a" style="left:370px;top:806px" width="18" height="16" viewBox="0 0 18 16">
<rect x="1.5" y="2.5" width="15" height="12" fill="#fafcff" stroke="#4c6a9c"/>
<rect x="2" y="3" width="14" height="3" fill="#7098dc"/>
<path d="M4 8.5h3M9 8.5h2.5M13 8.5h2M4 10.5h3M9 10.5h2.5M13 10.5h2M4 12.5h3M9 12.5h2.5M13 12.5h2" stroke="#8b9bbb"/>
<circle cx="3.8" cy="3.8" r="3" fill="#e2562c" stroke="#a8321a" stroke-width=".6"/>
</svg>
<div class="a" style="left:395px;top:806px;width:1px;height:18px;background:#b1c5df;box-shadow:1px 0 0 #f3f7fc"></div>
<!-- right: darker zone -->
<div class="a" style="left:820px;top:804px;width:295px;height:21px;background:linear-gradient(#c9dbf2,#bcd1ee 50%,#aec6e8)"></div>
<div class="a" style="left:819px;top:805px;width:1px;height:19px;background:#9fb5d2;box-shadow:1px 0 0 #eef4fb"></div>
<div class="a" style="left:824px;top:805px;width:92px;height:19px;border:1px solid #a7bcd9;border-radius:3px;background:linear-gradient(#eaf1fa,#d5e2f4 50%,#c7d8f0)"></div>
<div class="a" style="left:825px;top:806px;width:18px;height:17px;border:1px solid #d2a850;border-radius:2px;background:linear-gradient(#fde9b0,#fbd27a 50%,#f9c45d)"></div>
<div class="a" style="left:861px;top:806px;width:1px;height:17px;background:#c2d2e8"></div>
<div class="a" style="left:879px;top:806px;width:1px;height:17px;background:#c2d2e8"></div>
<div class="a" style="left:897px;top:806px;width:1px;height:17px;background:#c2d2e8"></div>
<svg class="a" style="left:824px;top:805px" width="92" height="19" viewBox="0 0 92 19">
<rect x="4.5" y="3.5" width="10" height="12" fill="#fdfdfb" stroke="#45505f"/><path d="M6.5 6.5h6M6.5 8.5h6M6.5 10.5h6M6.5 12.5h6" stroke="#45505f"/>
<path d="M21.5 4.5h5l1 1 1-1h5v10h-5l-1 1-1-1h-5Z" fill="#f8f9fb" stroke="#4e5968"/><path d="M23 7h3M23 9h3M23 11h3M29 7h3M29 9h3M29 11h3M27.5 5v10" stroke="#6e7887" stroke-width=".8"/>
<rect x="40.5" y="3.5" width="11" height="10" fill="#f6f8fb" stroke="#4e5968"/><path d="M42 6h7M42 8h5M42 10h5" stroke="#6e7887"/><circle cx="50" cy="13" r="3" fill="#3e8c5a" stroke="#2a5d3c" stroke-width=".6"/>
<path d="M59 5h8M61 7.5h6M61 10h6M59 12.5h8M59 7.5h1M59 10h1" stroke="#7e8796" stroke-width="1.1"/>
<path d="M76 5h9M76 7.5h9M76 10h9M76 12.5h9M76 15h9" stroke="#555f6d" stroke-width="1.1"/>
</svg>
<div class="t" style="left:924.5px;top:807.5px;font-size:11.3px;letter-spacing:-0.3px;color:#1b3762">105%</div>
<svg class="a" style="left:958px;top:803px" width="160" height="23" viewBox="0 0 160 23">
<defs><radialGradient id="zb" cx="50%" cy="35%" r="65%"><stop offset="0" stop-color="#fbfcfe"/><stop offset="1" stop-color="#c3cfdf"/></radialGradient></defs>
<path d="M19 11.5H121" stroke="#7d92b0" stroke-width="1"/><path d="M19 12.5H121" stroke="#eef4fb" stroke-width="1"/>
<circle cx="11" cy="11.3" r="7.6" fill="url(#zb)" stroke="#596b86" stroke-width="1.1"/><rect x="6.5" y="10.3" width="9" height="2.2" fill="#3a4658"/>
<circle cx="129" cy="11.3" r="7.6" fill="url(#zb)" stroke="#596b86" stroke-width="1.1"/><rect x="124.5" y="10.3" width="9" height="2.2" fill="#3a4658"/><rect x="127.9" y="6.8" width="2.2" height="9" fill="#3a4658"/>
<path d="M65.5 2.5h9v10l-4.5 4.5l-4.5-4.5Z" fill="#f3f6fa" stroke="#56677f"/><path d="M70 5v5" stroke="#9aa6b8"/>
<g fill="#5c6f8b"><rect x="152" y="6" width="2" height="2"/><rect x="148" y="10" width="2" height="2"/><rect x="152" y="10" width="2" height="2"/><rect x="144" y="14" width="2" height="2"/><rect x="148" y="14" width="2" height="2"/><rect x="152" y="14" width="2" height="2"/></g>
</svg>

<div class="a" style="left:345px;top:115px;width:177px;height:103px;border:1px solid #868a91;background:#fafafa;box-shadow:2px 2px 3px rgba(0,0,0,.35);border-radius:1px"></div>
<div class="a" style="left:346px;top:116px;width:175px;height:19px;background:linear-gradient(#e6ebf1,#dde4ec);border-bottom:1px solid #c5ccd6"></div>
<div class="a" style="left:358px;top:119px;font-family:'Liberation Sans',sans-serif;font-weight:bold;font-size:11px;color:#00156e;white-space:nowrap;line-height:14px">Формы предыдущих версий</div>
<div class="a" style="left:346px;top:156px;width:175px;height:18px;background:linear-gradient(#e3e8ef,#dbe2eb);border-top:1px solid #c9d0d9;border-bottom:1px solid #c9d0d9"></div>
<div class="a" style="left:358px;top:158.8px;font-family:'Liberation Sans',sans-serif;font-weight:bold;font-size:11px;color:#00156e;white-space:nowrap;line-height:14px">Элементы ActiveX</div>
<div class="a" style="left:427px;top:136px;width:20px;height:19px;border:1px solid #e3c06a;border-radius:2px;background:linear-gradient(#fef5d6,#fde8a8)"></div>
<svg class="a" style="left:346px;top:136px" width="175" height="80" viewBox="346 136 175 80">
<defs><pattern id="hat" width="3" height="3" patternUnits="userSpaceOnUse" patternTransform="rotate(45)"><rect width="3" height="3" fill="#efe6bf"/><rect width="1.4" height="3" fill="#8593b4"/></pattern></defs>
<text x="349" y="151" font-family="Liberation Serif" font-weight="bold" font-size="13" fill="#222" letter-spacing="-0.6">ab</text><rect x="363" y="140" width="1.2" height="12" fill="#111"/>
<rect x="370.5" y="139.5" width="11.5" height="11.5" fill="#e9edf5" stroke="#7c86a8"/><path d="M372.5 145l2.8 3 4.5-6" stroke="#2c3450" stroke-width="1.5" fill="none"/>
<rect x="389.5" y="138.5" width="15" height="14" fill="#f4f6fa" stroke="#6d7a96"/><path d="M391 141.5h6M391 144.5h6M391 147.5h6M391 150h6" stroke="#9aa4b8"/><rect x="398" y="139" width="6" height="13" fill="#bcc6d8"/><path d="M399 140h4l-2 2Z M399 146l2-2 2 2Z M399 148h4l-2 2Z" fill="#2e3a58"/>
<path d="M409 139.5h16M409 142h16M409 144.5h16M409 147h16M409 149.5h16M409 152h16" stroke="#1a1a1a" stroke-width="1"/><rect x="412.5" y="138.5" width="8" height="10" fill="#b9d6b0" stroke="#111" stroke-width="1" stroke-dasharray="1 1"/>
<rect x="430" y="139" width="14" height="13" fill="url(#hat)"/><rect x="432.5" y="141" width="9" height="10" fill="#f3ecc8"/><text x="437" y="150.5" font-family="Liberation Serif" font-weight="bold" font-size="13" fill="#2f2a18" text-anchor="middle">a</text>
<path d="M451 148l6-6q3-1 5 1q1 2-1 4l-4 4h-4q-2-1-2-3Z" fill="#fbfbfd" stroke="#6d7280"/><path d="M452 149l3 2" stroke="#c5c9d2"/><path d="M456 152h9" stroke="#1a1a1a" stroke-width="1.2"/>
<rect x="350.5" y="179.5" width="12" height="12" fill="#e9edf5" stroke="#6c7690" stroke-width="1.2"/><path d="M352.5 185l2.8 3 4.5-6" stroke="#2c3450" stroke-width="1.5" fill="none"/>
<rect x="370.5" y="179.5" width="14" height="12" fill="#eef1f6" stroke="#6c7690" stroke-width="1.2"/><text x="377.5" y="189" font-family="Liberation Serif" font-size="10" fill="#3a4566" text-anchor="middle" letter-spacing="-0.5">abl</text>
<text x="397" y="193" font-family="Liberation Serif" font-size="19" fill="#2f4282" text-anchor="middle">A</text>
<circle cx="416.8" cy="185.5" r="5" fill="#e6e9ee" stroke="#8b93a3" stroke-width="1.2"/><circle cx="416.8" cy="185.5" r="2.2" fill="#37415a"/>
<rect x="430.5" y="180.5" width="13" height="12" fill="#6f8fc7" stroke="#36466a"/><path d="M431 181l12 11V181Z" fill="#dfe8f6"/><path d="M431 181L443 192" stroke="#36466a"/>
<rect x="450" y="185" width="14.5" height="8" fill="#7e8590"/><path d="M453 186.5h8l-4 4Z" fill="#1a1a1a"/>
<rect x="349.5" y="198.5" width="16" height="15" fill="#f4f6fa" stroke="#6d7a96"/><rect x="350" y="199" width="15" height="3" fill="#c0cbe0"/><path d="M351 204.5h6M351 207h6M351 209.5h6M351 212h6" stroke="#9aa4b8"/><rect x="358" y="199" width="7" height="14" fill="#bcc6d8"/><path d="M359 200h5l-2.5 2Z M359 208l2.5-2 2.5 2Z M359 210h5l-2.5 2Z" fill="#2e3a58"/>
<defs><linearGradient id="bg1" x1="0" x2="1"><stop offset="0" stop-color="#e6e8ec"/><stop offset="1" stop-color="#5f656e"/></linearGradient></defs><rect x="370" y="202" width="13" height="7.5" fill="url(#bg1)"/>
<rect x="389.5" y="199.5" width="15" height="13" fill="#f4f6fa" stroke="#6d7a96"/><path d="M391 202.5h6M391 205h6M391 207.5h6M391 210h6" stroke="#9aa4b8"/><rect x="398" y="200" width="6" height="12" fill="#bcc6d8"/><path d="M399 205l2-2 2 2Z M399 207h4l-2 2Z" fill="#2e3a58"/>
<rect x="413" y="199" width="7.5" height="6.5" fill="#7d838c"/><rect x="413" y="206.5" width="7.5" height="6.5" fill="#7d838c"/><path d="M414.5 204l2.2-3 2.2 3Z M414.5 208h4.4l-2.2 3Z" fill="#111"/>
<rect x="433" y="199.5" width="9" height="5" fill="url(#bg1)"/><rect x="433" y="208" width="9" height="5" fill="url(#bg1)"/><rect x="432" y="204" width="10" height="1.3" fill="#111"/><rect x="432" y="204" width="1.3" height="9" fill="#111"/>
<path d="M452 211L462 201" stroke="#3a3a3a" stroke-width="2.2"/><path d="M459 199.5l5 3.5l-2.2 2.2l-3.5-4Z" fill="#4b525c"/><path d="M453 201l9 9" stroke="#7f8690" stroke-width="2"/><path d="M453 201l9 9" stroke="#eef0f3" stroke-width=".8"/><circle cx="452.5" cy="200.5" r="2.2" fill="none" stroke="#5a616b" stroke-width="1.4"/><path d="M451.5 209.5l2 2" stroke="#e2b93a" stroke-width="2.4"/>
<rect x="458" y="213" width="1.5" height="1.5" fill="#111"/><rect x="461" y="213" width="1.5" height="1.5" fill="#111"/><rect x="464" y="213" width="1.5" height="1.5" fill="#111"/>
</svg>
<!-- tooltip -->
<div class="a" style="left:431px;top:162.5px;width:144px;height:22px;border:1px solid #767676;border-radius:2px;background:linear-gradient(#fdfeff,#e6ecf6);box-shadow:1px 1px 2px rgba(0,0,0,.3)"></div>
<div class="t" style="left:436px;top:167.5px;font-size:11.5px;color:#4c4c4c">Затенение полей формы</div>

<div class="a" style="left:4px;top:0;width:1119px;height:26px;background:linear-gradient(rgba(25,45,80,.45) 0,rgba(25,45,80,.15) 18%,rgba(25,45,80,0) 35%,rgba(255,255,255,0) 85%,rgba(235,242,250,.35) 96%,rgba(235,242,250,0) 100%)"></div>
<!-- pinkish glow near office button -->
<div class="a" style="left:4px;top:0;width:120px;height:27px;background:radial-gradient(ellipse 60px 30px at 30px 18px,rgba(205,130,145,.55),rgba(190,140,160,0) 100%)"></div>
<!-- QAT pill -->
<div class="a" style="left:48px;top:3px;width:96px;height:21px;border:1px solid #8e99a6;border-left:none;border-radius:0 11px 11px 0;background:linear-gradient(#d4dae2,#c3ccd6 50%,#b6c1cd)"></div>
<!-- office button -->
<svg class="a" style="left:13px;top:3px" width="41" height="41" viewBox="0 0 41 41">
<defs><radialGradient id="ob" cx="50%" cy="40%" r="60%"><stop offset="0" stop-color="#fbfbfd"/><stop offset=".6" stop-color="#e4e7ee"/><stop offset="1" stop-color="#b9c0cc"/></radialGradient></defs>
<circle cx="20.3" cy="20.3" r="18" fill="url(#ob)" stroke="#7d8796" stroke-width="1.2"/>
<path d="M10 10h8.5v8.5h-8.5Z" fill="#f3e6e0" stroke="#d9561a" stroke-width="3.6" stroke-linejoin="round"/>
<path d="M11.5 23.5h7.5v7h-7.5Z" fill="#fbf2d8" stroke="#f0b21a" stroke-width="3.6" stroke-linejoin="round"/>
<path d="M23 23.5h7v6.5h-7Z" fill="#e2f0da" stroke="#4b9b2c" stroke-width="3.6" stroke-linejoin="round"/>
<path d="M23.5 13h5.5v6h-5.5Z" fill="none" stroke="#2e7fd0" stroke-width="2.6" stroke-dasharray="3.5 2"/>
<circle cx="20.7" cy="20.5" r="1.2" fill="#d9561a"/><circle cx="20.7" cy="23.2" r="1" fill="#f0b21a"/>
</svg>
<!-- save -->
<svg class="a" style="left:63px;top:6px" width="16" height="16" viewBox="0 0 16 16">
<rect x="1" y="1" width="14" height="14" rx="1" fill="#4e4fb6" stroke="#2c2d7a" stroke-width=".8"/>
<rect x="3" y="1.5" width="10" height="6.5" fill="#f2f4fa"/>
<rect x="4" y="10" width="7" height="5" fill="#2a2a44"/><rect x="7" y="11" width="3" height="3" fill="#eee"/>
</svg>
<!-- undo -->
<svg class="a" style="left:85px;top:7px" width="15" height="14" viewBox="0 0 15 14">
<path d="M3 4Q10 1 12 6Q13 10 9 12" stroke="#3d6ec2" stroke-width="2.4" fill="none"/>
<path d="M1 2L6 2L2.5 7Z" fill="#3d6ec2"/>
</svg>
<svg class="a" style="left:104px;top:12px" width="7" height="5"><path d="M0.5 0.5L3.5 3.5L6.5 0.5" stroke="#4d6b9a" stroke-width="1.2" fill="none"/></svg>
<!-- redo circle -->
<svg class="a" style="left:118px;top:7px" width="15" height="15" viewBox="0 0 15 15">
<path d="M10.5 3.5A5 5 0 1 1 4 3.5" stroke="#3d6ec2" stroke-width="2.6" fill="none"/>
<path d="M8.5 0.5L13.5 1L11 5.5Z" fill="#3d6ec2"/>
</svg>
<!-- customize -->
<svg class="a" style="left:151px;top:9px" width="8" height="9" viewBox="0 0 8 9"><path d="M1 1.5h6" stroke="#1f3358" stroke-width="1.2"/><path d="M0.5 3.5H7.5L4 8Z" fill="#1f3358"/></svg>
<!-- title text glow -->
<div class="a" style="left:262px;top:1px;width:610px;height:24px;background:radial-gradient(ellipse 50% 50% at 50% 55%,rgba(214,223,232,.95) 0%,rgba(210,220,230,.8) 70%,rgba(200,212,225,0) 100%)"></div>
<div class="a" style="left:262px;top:4px;width:18px;height:14px;background:radial-gradient(ellipse at center,rgba(120,210,220,.6),rgba(120,210,220,0) 70%)"></div>
<div class="t" style="left:288px;top:6px;font-size:12.2px;color:#101010;line-height:15px;text-shadow:0 0 6px #e9eef3,0 0 3px #eef2f6">shab1 [Режим ограниченной функциональности] - Microsoft Word некоммерческое использование</div>
<!-- caption buttons -->
<div class="a" style="left:1022px;top:0;width:94px;height:15px;border:1px solid #3a475a;border-top:none;border-radius:0 0 5px 5px;overflow:hidden;box-shadow:0 1px 0 rgba(230,238,246,.6)">
 <div class="a" style="left:0;top:0;width:26px;height:14px;background:linear-gradient(#c9d2dc,#a9b6c4 45%,#71849a 55%,#8a9cb0);border-right:1px solid #3a475a"></div>
 <div class="a" style="left:26px;top:0;width:24px;height:14px;background:linear-gradient(#c9d2dc,#a9b6c4 45%,#71849a 55%,#8a9cb0);border-right:1px solid #3a475a"></div>
 <div class="a" style="left:50px;top:0;width:43px;height:14px;background:linear-gradient(#e9ab9d,#dc8e7c 45%,#c5462b 55%,#d26446)"></div>
 <div class="a" style="left:8px;top:6px;width:11px;height:4px;background:#f4f6f9;border:1px solid #2c3a4c"></div>
 <div class="a" style="left:33px;top:1px;width:11px;height:9px;border:1px solid #2c3a4c;background:#f4f6f9"><div class="a" style="left:1px;top:2px;width:7px;height:3px;background:#6f7f92;border:1px solid #2c3a4c"></div></div>
 <svg class="a" style="left:65px;top:1px" width="13" height="11" viewBox="0 0 13 11"><path d="M2.5 1.5L10.5 9.5M10.5 1.5L2.5 9.5" stroke="#5a2a20" stroke-width="3.6"/><path d="M2.5 1.5L10.5 9.5M10.5 1.5L2.5 9.5" stroke="#f6f7f3" stroke-width="2.2"/></svg>
</div>

</body></html>
